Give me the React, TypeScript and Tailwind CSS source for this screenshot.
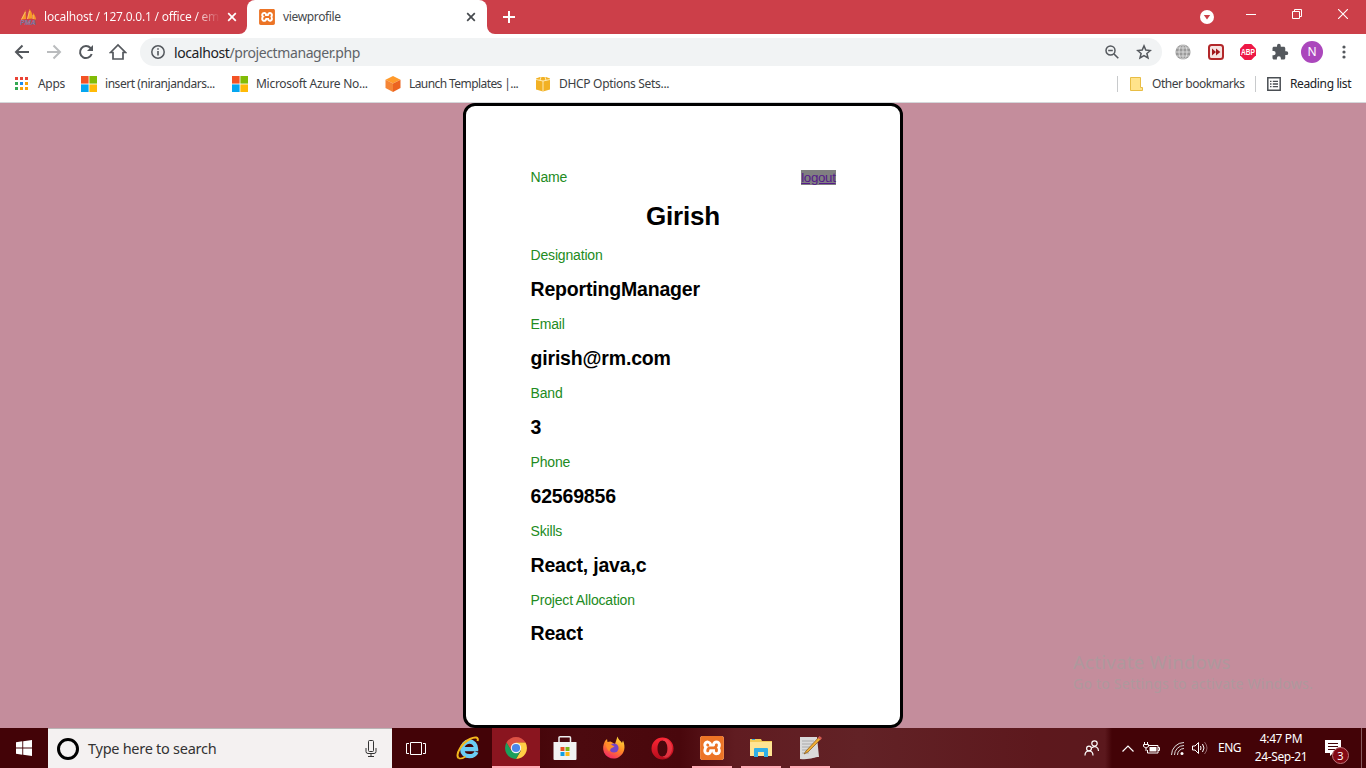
import type { ReactNode } from "react";
import { SiXampp } from "react-icons/si";

const ui = "font-['Noto_Sans',sans-serif]";

function Xampp({ large }: { large?: boolean }) {
  return (
    <span className={`relative flex shrink-0 items-center justify-center bg-white ${large ? "size-6 rounded-[3px]" : "size-4 rounded-[2px]"}`}>
      <SiXampp className="size-full text-[#ec7426]" />
    </span>
  );
}

function MsSquares() {
  return (
    <svg width="16" height="16" viewBox="0 0 16 16" className="shrink-0">
      <path fill="#f35325" d="M0 0h7.600v7.600H0z" /><path fill="#81bc06" d="M8.400 0H16v7.600H8.400z" />
      <path fill="#05a6f0" d="M0 8.400h7.600V16H0z" /><path fill="#ffba08" d="M8.400 8.400H16V16H8.400z" />
    </svg>
  );
}

const appDots = ["#ea4335", "#ea4335", "#ea4335", "#34a853", "#1a8cf0", "#f9a10a", "#34a853", "#f9a10a", "#f9a10a"];

function TabStrip() {
  return (
    <div className="bg-white">
      <div className="flex h-[34px] text-white">
        <div className="flex w-[247px] items-center rounded-br-lg bg-[#cc3f49] pl-5">
          <svg width="17" height="16" viewBox="0 0 17 16" className="shrink-0">
            <path d="M5.500 1L1 10.500l5-.5zM9.500 0L7 10l5-.5C13 5 11 2 9.500 0zM13 4l-.5 6 3.500.5c0-2.500-1.500-5-3-6.500z" fill="#f79a25" />
            <path d="M1.500 10.500L5.500 3M7.500 10l2-8M13 10V6" stroke="#f8c98c" strokeWidth=".7" />
            <text x="0" y="15.700" textLength="16" lengthAdjust="spacingAndGlyphs" fontFamily="Liberation Sans" fontSize="7" fontWeight="bold" fontStyle="italic" fill="#4c5288" stroke="#c9a5b5" strokeWidth=".25">PMA</text>
          </svg>
          <span className={`${ui} ml-[7px] w-[175px] whitespace-nowrap bg-[linear-gradient(to_right,#fff_152px,#cc3f49_176px)] bg-clip-text text-[12px] tracking-[-0.220px] text-transparent`}>localhost / 127.0.0.1 / office / em</span>
          <svg width="10" height="10" viewBox="0 0 10 10" className="ml-[8px] shrink-0"><path d="M1.200 1.200l7.600 7.600m0-7.600L1.200 8.800" stroke="#fff" strokeWidth="1.700" /></svg>
        </div>
        <div className="flex w-[240px] bg-[#cc3f49]">
          <div className="flex flex-1 items-center rounded-t-lg bg-white pl-3 pr-[11px]">
            <Xampp />
            <span className={`${ui} ml-2 flex-1 text-[12px] tracking-[-0.350px] text-[#45494d]`}>viewprofile</span>
            <svg width="10" height="10" viewBox="0 0 10 10"><path d="M1.200 1.200l7.600 7.600m0-7.600L1.200 8.800" stroke="#45494d" strokeWidth="1.700" /></svg>
          </div>
        </div>
        <div className="flex flex-1 items-center rounded-bl-lg bg-[#cc3f49] pl-4">
          <svg width="12" height="12" viewBox="0 0 12 12"><path d="M6 0v12M0 6h12" stroke="#fff" strokeWidth="2" /></svg>
        </div>
        <div className="flex items-start bg-[#cc3f49] pr-[18px]">
          <svg width="14" height="14" viewBox="0 0 14 14" className="mt-[10px]"><circle cx="7" cy="7" r="7" fill="#fff" /><path d="M3.800 5h6.400L7 9.500z" fill="#cc3f49" /></svg>
          <svg width="10" height="10" viewBox="0 0 10 10" className="ml-8 mt-[9px]"><path d="M0 5.500h10" stroke="#fff" /></svg>
          <svg width="10" height="10" viewBox="0 0 10 10" className="ml-9 mt-[9px]"><path d="M.5 2.500h7v7h-7zM2.500 2.500v-2h7v7h-2" fill="none" stroke="#fff" /></svg>
          <svg width="10" height="10" viewBox="0 0 10 10" className="ml-9 mt-[9px]"><path d="M0 0l10 10M10 0L0 10" stroke="#fff" strokeWidth="1.100" /></svg>
        </div>
      </div>
    </div>
  );
}

function Toolbar() {
  return (
    <div className="flex h-[36px] items-center bg-white pl-[14px] pr-[12px]">
      <svg width="16" height="16" viewBox="0 0 16 16"><path d="M15 8H2.500M8.500 1.500L2 8l6.500 6.500" fill="none" stroke="#54585d" strokeWidth="2" /></svg>
      <svg width="16" height="16" viewBox="0 0 16 16" className="ml-4"><path d="M1 8h12.500M7.500 1.500L14 8l-6.500 6.500" fill="none" stroke="#babcbe" strokeWidth="2" /></svg>
      <svg width="16" height="16" viewBox="0 0 16 16" className="ml-4"><path d="M13.700 10A6 6 0 1 1 12.500 4L14 5.500" fill="none" stroke="#54585d" strokeWidth="2" /><path d="M15 1v6H9z" fill="#54585d" /></svg>
      <svg width="18" height="18" viewBox="0 0 18 18" className="ml-[15px]"><path d="M1.500 9.500L9 2l7.500 7.500H14V16H4V9.500z" fill="none" stroke="#54585d" strokeWidth="1.700" /></svg>
      <div className="ml-[13px] flex h-7 w-[1022px] items-center rounded-full bg-[#f1f3f4] pl-[11px] pr-[10px]">
        <svg width="14" height="14" viewBox="0 0 14 14"><circle cx="7" cy="7" r="6.200" fill="none" stroke="#54585d" strokeWidth="1.500" /><path d="M7 6v4.500M7 3.200v1.600" stroke="#54585d" strokeWidth="1.600" /></svg>
        <span className={`${ui} ml-[9px] flex-1 text-[14px] tracking-[-0.410px] text-[#5f6368]`}><span className="text-[#202124]">localhost</span>/projectmanager.php</span>
        <svg width="14" height="14" viewBox="0 0 14 14"><circle cx="5.500" cy="5.500" r="4.500" fill="none" stroke="#54585d" strokeWidth="1.500" /><path d="M9 9l4.300 4.300M3.200 5.500h4.600" stroke="#54585d" strokeWidth="1.600" /></svg>
        <svg width="16" height="16" viewBox="0 0 16 16" className="ml-[17px]"><path d="M8 1.900l1.800 4.200 4.600.4-3.500 3 1.100 4.500-4-2.400L4 14l1.100-4.500-3.500-3 4.600-.4z" fill="none" stroke="#54585d" strokeWidth="1.500" /></svg>
      </div>
      <svg width="16" height="16" viewBox="0 0 16 16" className="ml-[13px]"><circle cx="8" cy="8" r="7.600" fill="#999" /><path d="M8 0v16M0 8h16M1.500 4h13M1.500 12h13" stroke="#e4e4e4" strokeWidth=".8" /><ellipse cx="8" cy="8" rx="4" ry="7.600" fill="none" stroke="#e4e4e4" strokeWidth=".8" /></svg>
      <svg width="16" height="16" viewBox="0 0 16 16" className="ml-[17px]"><rect x="1" y="1" width="14" height="14" rx="2.500" fill="#f6e4e2" stroke="#b3282a" strokeWidth="2" /><path d="M4 4.500L8 8l-4 3.500zM8 4.500L12.300 8 8 11.500z" fill="#a0171b" /></svg>
      <svg width="16" height="16" viewBox="0 0 16 16" className="ml-4"><path d="M4.700 0h6.600L16 4.700v6.600L11.300 16H4.700L0 11.300V4.700z" fill="#ee1845" /><text x="1" y="11.200" textLength="14" lengthAdjust="spacingAndGlyphs" fontFamily="Liberation Sans" fontSize="8.800" fontWeight="bold" fill="#fff">ABP</text></svg>
      <svg width="18" height="18" viewBox="0 0 24 24" className="ml-[15px]"><path fill="#54585d" d="M20.500 11H19V7c0-1.100-.9-2-2-2h-4V3.500a2.500 2.500 0 0 0-5 0V5H4c-1.100 0-2 .9-2 2v3.800h1.500a2.700 2.700 0 0 1 0 5.400H2V20c0 1.100.9 2 2 2h3.800v-1.500a2.700 2.700 0 0 1 5.400 0V22H17c1.100 0 2-.9 2-2v-4h1.500a2.500 2.500 0 0 0 0-5z" /></svg>
      <span className={`${ui} ml-3 flex size-[22px] items-center justify-center rounded-full bg-[#ab47bc] text-[12px] text-white`}>N</span>
      <svg width="4" height="14" viewBox="0 0 4 14" className="ml-[19px]"><circle cx="2" cy="2" r="1.600" fill="#54585d" /><circle cx="2" cy="7" r="1.600" fill="#54585d" /><circle cx="2" cy="12" r="1.600" fill="#54585d" /></svg>
    </div>
  );
}

function Bookmark({ icon, label, className }: { icon: ReactNode; label: string; className: string }) {
  return <div className={`flex shrink-0 items-center gap-2 whitespace-nowrap ${className}`}>{icon}<span>{label}</span></div>;
}

function Bookmarks() {
  return (
    <div className={`${ui} flex h-[33px] items-center border-b border-[#d5d7da] bg-white pb-1 pl-[15px] text-[12px] text-[#3c4043]`}>
      <Bookmark className="w-[66px] tracking-[-0.300px]" label="Apps" icon={
        <svg width="14" height="14" viewBox="0 0 14 14" className="mr-[1px]">{appDots.map((c, i) => <rect key={i} x={(i % 3) * 5} y={Math.floor(i / 3) * 5} width="3" height="3" fill={c} />)}</svg>
      } />
      <Bookmark className="w-[151px] tracking-[-0.450px]" label="insert (niranjandars..." icon={<MsSquares />} />
      <Bookmark className="w-[153px] tracking-[-0.280px]" label="Microsoft Azure No..." icon={<MsSquares />} />
      <Bookmark className="w-[150px] tracking-[-0.580px]" label="Launch Templates |..." icon={
        <svg width="16" height="16" viewBox="0 0 16 16"><path d="M8 0l7.500 3.800L8 7.500.5 3.800z" fill="#ff9a2b" /><path d="M.5 3.800L8 7.500V16l-7.500-4z" fill="#f58536" /><path d="M15.500 3.800L8 7.500V16l7.500-4z" fill="#ec6420" /></svg>
      } />
      <Bookmark className="flex-1 tracking-[-0.310px]" label="DHCP Options Sets..." icon={
        <svg width="16" height="16" viewBox="0 0 16 16"><path d="M1 2.500L5 1h6l4 1.500v11L8 15.500l-7-2z" fill="#f2b124" /><path d="M1 3.500l7 1.500 7-1.500M8 5v10.500M5 4.200l1-3.200M11 4.200L10 1" fill="none" stroke="#fff0c5" strokeWidth=".9" /></svg>
      } />
      <div className="flex w-[249px] items-center">
        <span className="h-4 w-px bg-[#c8cacc]" />
        <svg width="13" height="14" viewBox="0 0 13 14" className="ml-3"><path d="M.5.5h10v10h2v3H.5z" fill="#ffe38b" stroke="#e8bd45" /></svg>
        <span className="ml-[9px] w-[103px] whitespace-nowrap tracking-[-0.450px]">Other bookmarks</span>
        <span className="h-4 w-px bg-[#c8cacc]" />
        <svg width="14" height="14" viewBox="0 0 14 14" className="ml-[11px]"><path d="M.8.800h12.400v12.400H.8z" fill="none" stroke="#4a4e53" strokeWidth="1.500" /><path d="M3 4.300h1.500M3 7h1.500M3 9.700h1.500M5.800 4.300H11M5.800 7H11M5.800 9.700H11" stroke="#4a4e53" strokeWidth="1.300" /></svg>
        <span className="ml-[9px] whitespace-nowrap tracking-[-0.370px] text-[#202124]">Reading list</span>
      </div>
    </div>
  );
}

const fields = [
  ["Designation", "ReportingManager"],
  ["Email", "girish@rm.com"],
  ["Band", "3"],
  ["Phone", "62569856"],
  ["Skills", "React, java,c"],
  ["Project Allocation", "React"],
];

function Profile() {
  return (
    <main className="relative flex h-[625px] justify-center bg-[#c48d9c] font-['Liberation_Sans',Arial,sans-serif]">
      <section className="h-[625px] w-[440px] rounded-[12px] border-[3px] border-black bg-white px-[64.500px] pt-[63px]">
        <div className="flex h-4 items-center justify-between">
          <span className="text-[14px] leading-4 tracking-[-0.170px] text-[#228b22]">Name</span>
          <a href="#logout" className="bg-[#808080] text-[13.300px] leading-[15px] tracking-[-0.330px] text-[#551a8b] underline">logout</a>
        </div>
        <h1 className="mt-[16px] h-[30px] text-center text-[26px] font-bold leading-[30px] tracking-[-0.200px] text-black">Girish</h1>
        <dl className="mt-4">
          {fields.map(([label, value]) => (
            <div key={label} className="group h-[69px]">
              <dt className="h-4 text-[14px] leading-4 tracking-[-0.170px] text-[#228b22]">{label}</dt>
              <dd className="mt-[15px] text-[19.500px] font-bold leading-[22px] tracking-[-0.180px] text-black group-last:mt-[14px]">{value}</dd>
            </div>
          ))}
        </dl>
      </section>
      <div className={`${ui} absolute left-[1073px] top-[547px] whitespace-nowrap text-[#ae999d]`}>
        <div className="text-[18.500px] leading-[24px] tracking-[0.300px]">Activate Windows</div>
        <div className="text-[14px] leading-[20px] tracking-[0.230px]">Go to Settings to activate Windows.</div>
      </div>
    </main>
  );
}

function Edge() {
  return (
    <svg width="24" height="24" viewBox="0 0 24 24">
      <path d="M20.500 16c-1.200 2.700-3.900 4.200-7 4.200-4.300 0-7.300-2.900-7.300-7S9.200 5.500 13.200 5.500s7 3.200 6.900 7.700H8" fill="none" stroke="#6bcdf5" strokeWidth="4.300" />
      <path d="M2.500 22C-1 18 6 7 14 3c5-2.500 9-2 7.500 2" fill="none" stroke="#f4b81d" strokeWidth="2" />
      <path d="M2.500 22c1.500 1 4 .5 7-1.500" fill="none" stroke="#f4b81d" strokeWidth="1.600" />
    </svg>
  );
}

function Chrome() {
  return (
    <svg width="22" height="22" viewBox="0 0 22 22">
      <path d="M1.500 5.500A11 11 0 0 1 20.500 5.500H11L6.300 13.700z" fill="#dd5144" />
      <path d="M20.500 5.500A11 11 0 0 1 11 22l4.800-8.200L11 5.500z" fill="#ffce45" />
      <path d="M11 22A11 11 0 0 1 1.500 5.500l4.800 8.300h9.400z" fill="#1c9f5b" />
      <circle cx="11" cy="11" r="5.200" fill="#f4f4f4" /><circle cx="11" cy="11" r="4.100" fill="#4b87eb" />
    </svg>
  );
}

function Store() {
  return (
    <svg width="24" height="24" viewBox="0 0 24 24">
      <path d="M6 8V1.700Q6 .8 7 .8h9.500q1 0 1 1V8" fill="none" stroke="#eee" strokeWidth="1.500" /><path d="M.5 6h23v17q0 1-1 1h-21q-1 0-1-1z" fill="#f2f2f2" />
      <path fill="#e94f21" d="M7.500 11h4v4h-4z" /><path fill="#7bb516" d="M12.500 11h4v4h-4z" /><path fill="#119fe3" d="M7.500 16h4v4h-4z" /><path fill="#fdb813" d="M12.500 16h4v4h-4z" />
    </svg>
  );
}

function Firefox() {
  return (
    <svg width="24" height="24" viewBox="0 0 24 24">
      <defs><linearGradient id="fox" x1=".8" y1="0" x2=".3" y2="1"><stop stopColor="#ffe13c" /><stop offset=".5" stopColor="#ff8a25" /><stop offset="1" stopColor="#f42566" /></linearGradient></defs>
      <path d="M3 5l2-2 .5 3 3-.5L13 8l2.500-7.500c.5 3 3.500 4.500 4.500 6.500l1-2.500c3 7 1.500 13-4 16.500-5 3-12 1.500-15-4.500-1.500-4-1-7.500 1-11.500z" fill="url(#fox)" />
      <circle cx="12" cy="12" r="4.600" fill="#7545c6" /><path d="M4 8l5 .5 3.500 2-3.500 2-2 3c-2-2-3-5-3-7.500z" fill="#ff8c2b" />
    </svg>
  );
}

function Opera() {
  return (
    <svg width="23" height="23" viewBox="0 0 23 23">
      <defs><linearGradient id="opera" x2="0" y2="1"><stop stopColor="#ff2635" /><stop offset="1" stopColor="#b40c1b" /></linearGradient></defs>
      <path fillRule="evenodd" fill="url(#opera)" d="M11.500.500a11 11 0 1 0 0 22 11 11 0 0 0 0-22m0 3c3 0 5 3.500 5 8s-2 8-5 8-5-3.500-5-8 2-8 5-8" />
      <path d="M11.500 3.500c1-1 3-1.500 5-.8a10.800 10.800 0 0 1 0 17.600c-2 .7-4 .2-5-.8 3 0 5-3.500 5-8s-2-8-5-8z" fill="#f04a55" opacity=".6" />
    </svg>
  );
}

function Explorer() {
  return (
    <svg width="22" height="20" viewBox="0 0 22 20">
      <path d="M0 1h11l1 2h10v15H0z" fill="#f4cb56" /><path d="M0 4h22v14H0z" fill="#ffe493" /><path d="M2 1.500h3" stroke="#35a8e0" />
      <path d="M4 19v-8q0-1 1-1h12q1 0 1 1v8h-4v-5H8v5z" fill="#31afe7" />
    </svg>
  );
}

function Notepad() {
  return (
    <svg width="24" height="24" viewBox="0 0 24 24">
      <path d="M2 1h17l2 20c-5 0-8 3-19 2z" fill="#dadada" /><path d="M4 5h12M4 8h11M4 11h9M4 14h7M4 17h7" stroke="#aaa" />
      <path d="M8 15L21 1l2 2-13 13-4 2z" fill="#f0ad32" stroke="#80561d" strokeWidth=".7" /><path d="M20 2l1.500-2L24 2l-1.500 2z" fill="#d35a53" />
    </svg>
  );
}

function TaskIcon({ children, running, active }: { children: ReactNode; running?: boolean; active?: boolean }) {
  return (
    <div className={`relative flex h-10 shrink-0 items-center justify-center ${active ? "w-12 bg-[#8a151f]" : "w-[49px]"}`}>
      {children}
      {running && <span className={`absolute bottom-0 h-[2px] bg-[#ffabb5] ${active ? "w-full" : "w-10"}`} />}
    </div>
  );
}

function Taskbar() {
  return (
    <footer className={`${ui} flex h-10 bg-[#430307] bg-[linear-gradient(90deg,transparent_0px,transparent_510px,#4c0a0f_580px,#49070c_680px,#601c21_735px,#622226_860px,#5d181d_1040px,#5b181d_1105px,#430307_1112px)] text-white`}>
      <div className="flex w-12 items-center justify-center">
        <svg width="16" height="16" viewBox="0 0 16 16"><path fill="#fff" d="M0 2.200l6.300-.9v6.200H0zM7.200 1.200L16 0v7.500H7.200zM0 8.500h6.300v6.200L0 13.800zM7.200 8.500H16V16l-8.800-1.200z" /></svg>
      </div>
      <div className="flex w-[344px] items-center border-t border-[#b9b4b5] bg-[#f4f1f1] pl-[9px] pr-[14px] text-[#333]">
        <span className="size-[22px] rounded-full border-[3px] border-black" />
        <span className="ml-[9px] flex-1 text-[14.500px] tracking-[-0.270px]">Type here to search</span>
        <svg width="14" height="17" viewBox="0 0 14 17"><rect x="4.500" y=".5" width="5" height="11" rx="1" fill="none" stroke="#333" /><path d="M2 8v3.500q0 2 2 2h6q2 0 2-2V8M7 13.500v3M4 16.500h6" fill="none" stroke="#333" /></svg>
      </div>
      <div className="flex w-[51px] items-center pl-[14px]"><svg width="20" height="15" viewBox="0 0 20 15"><path d="M4.500 1.500h11v12h-11zM3 2.500H.5v10H3M17 2.500h2.500v10H17" fill="none" stroke="#fff" /></svg></div>
      <TaskIcon><Edge /></TaskIcon>
      <TaskIcon active running><Chrome /></TaskIcon>
      <TaskIcon><Store /></TaskIcon>
      <TaskIcon><Firefox /></TaskIcon>
      <TaskIcon><Opera /></TaskIcon>
      <TaskIcon running><Xampp large /></TaskIcon>
      <TaskIcon running><Explorer /></TaskIcon>
      <TaskIcon running><Notepad /></TaskIcon>
      <div className="flex flex-1 items-center justify-end pr-1">
        <svg width="16" height="16" viewBox="0 0 16 16"><g fill="none" stroke="#fff" strokeWidth="1.200"><circle cx="10.500" cy="3.500" r="2.700" /><circle cx="5" cy="8.500" r="2.400" /><path d="M1 15.500c0-6 8-6 8 0M8 7.800c3-2.500 6.500-.5 6.500 3.200" /></g></svg>
        <svg width="12" height="7" viewBox="0 0 12 7" className="ml-[22px]"><path d="M.5 6.500L6 1l5.500 5.500" fill="none" stroke="#fff" strokeWidth="1.200" /></svg>
        <svg width="17" height="13" viewBox="0 0 17 13" className="ml-[9px]"><path d="M6 3.500h9v7.500H4.500V8M15 5.500h1.500v3H15" fill="none" stroke="#fff" /><path d="M6.500 5h7v4.500h-7z" fill="#fff" /><path d="M1.500 0v2.500M4.500 0v2.500M.5 2.500h5v2q-2.500 3-5 0zM3 6v3" fill="none" stroke="#fff" /></svg>
        <svg width="13" height="13" viewBox="0 0 13 13" className="ml-[11px]"><g fill="none" stroke="#ddd"><path d="M.5 13A12.500 12.500 0 0 1 13 .5M3.500 13A9.500 9.500 0 0 1 13 3.500M6.500 13A6.500 6.500 0 0 1 13 6.500" /></g><circle cx="11" cy="11.500" r="1.500" fill="#fff" /></svg>
        <svg width="16" height="14" viewBox="0 0 16 14" className="ml-2"><path d="M.5 5h2.500l3.500-3.500v11L3 9H.5zM8.500 5q1 2 0 4M10.500 3q3 4 0 8" fill="none" stroke="#fff" /><path d="M12.500 1q5 6 0 12" fill="none" stroke="#92646a" /></svg>
        <span className="ml-[10px] w-[24px] text-[12px] tracking-[-0.500px]">ENG</span>
        <div className="ml-[10px] w-[58px] whitespace-nowrap text-center text-[12px] leading-[18px] tracking-[-0.400px]"><div>4:47 PM</div><div>24-Sep-21</div></div>
        <div className="relative ml-[15px] h-10 w-[36px]">
          <svg width="16" height="16" viewBox="0 0 16 16" className="mt-3"><path d="M0 0h16v13H8l-3 3v-3H0z" fill="#fff" /><path d="M3 3.500h10M3 6.500h10M3 9.500h7" stroke="#430307" /></svg>
          <span className="absolute left-[7px] top-[19px] flex size-[17px] items-center justify-center rounded-full border border-[#bd747a] bg-[#830914] text-[11px] leading-none">3</span>
        </div>
        <span className="h-10 w-px bg-[#865b5f]" />
      </div>
    </footer>
  );
}

export default function App() {
  return (
    <div className="flex h-[768px] w-[1366px] flex-col overflow-hidden bg-white">
      <TabStrip />
      <Toolbar />
      <Bookmarks />
      <Profile />
      <Taskbar />
    </div>
  );
}
